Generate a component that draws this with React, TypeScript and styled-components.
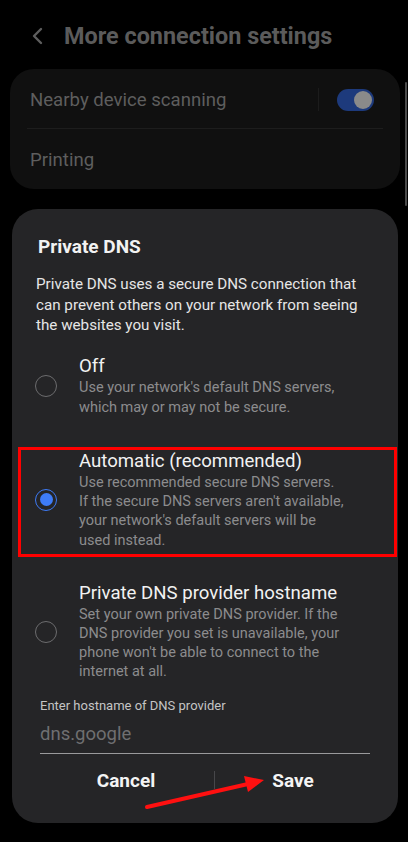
import React from "react";
import styled, { createGlobalStyle } from "styled-components";

const Global = createGlobalStyle`
  html, body { margin: 0; padding: 0; background: #000; }
  body { font-family: Roboto, "Noto Sans", Arial, sans-serif; -webkit-font-smoothing: antialiased; }
  #root { width: 408px; height: 842px; }
`;

const Screen = styled.div`
  position: relative;
  width: 408px;
  height: 842px;
  background: #000;
  overflow: hidden;
  display: flex;
  flex-direction: column;
`;

const Header = styled.div`
  height: 69px;
  display: flex;
  align-items: center;
  padding-left: 31px;
  gap: 19px;
  box-sizing: border-box;
  padding-top: 3px;
`;

const Title = styled.div`
  font-size: 23.4px;
  font-weight: 700;
  color: #5b5b5b;
`;

const Card = styled.div`
  margin: 0 8px 0 10px;
  background: #101010;
  border-radius: 24px;
  display: flex;
  flex-direction: column;
`;

const Row = styled.div<{ $divider?: boolean }>`
  position: relative;
  height: 60px;
  display: flex;
  align-items: center;
  padding: 1px 26px 0 20px;
  box-sizing: border-box;
  font-size: 18.6px;
  color: #5e5e5e;
  ${(p) =>
    p.$divider &&
    `&::after { content: ""; position: absolute; left: 17px; right: 17px; bottom: 0; height: 1px; background: #1d1d1d; }`}
`;

const RowLabel = styled.span`
  flex: 1;
`;

const VDivider = styled.div`
  width: 1px;
  height: 23px;
  background: #1c1c1c;
  margin-right: 18px;
`;

const Toggle = styled.div`
  width: 37px;
  height: 22px;
  border-radius: 11px;
  background: #1d3a7c;
  display: flex;
  align-items: center;
  justify-content: flex-end;
  padding-right: 2px;
  box-sizing: border-box;
`;

const Knob = styled.div`
  width: 18px;
  height: 18px;
  border-radius: 50%;
  background: #8a8a8a;
`;

const ScrollBar = styled.div`
  position: absolute;
  left: 405px;
  top: 82px;
  width: 2px;
  height: 124px;
  background: #4a4a4a;
  border-radius: 1px;
`;

const Dialog = styled.div`
  position: relative;
  margin: 20px 10px 0 12px;
  background: #252527;
  border-radius: 26px;
  padding: 26px 0 21px;
  display: flex;
  flex-direction: column;
`;

const DialogTitle = styled.div`
  margin: 0 24px 0 26px;
  font-size: 19px;
  line-height: 24px;
  font-weight: 700;
  color: #f2f2f2;
`;

const DialogText = styled.div`
  margin: 15px 18px 0 24px;
  font-size: 15.2px;
  line-height: 20.5px;
  color: #e6e6e6;
`;

const Options = styled.div`
  margin: 16px 1px 0 6px;
  display: flex;
  flex-direction: column;
  gap: 22px;
`;

const Option = styled.div<{ $highlight?: boolean }>`
  display: flex;
  align-items: center;
  gap: 22px;
  padding: 0 8px 4px 14px;
  border: 3px solid ${(p) => (p.$highlight ? "#ff0000" : "transparent")};
`;

const Radio = styled.div<{ $checked?: boolean }>`
  flex: none;
  width: 22px;
  height: 22px;
  box-sizing: border-box;
  border-radius: 50%;
  border: 1.5px solid ${(p) => (p.$checked ? "#3d7af5" : "#6c6c6e")};
  display: flex;
  align-items: center;
  justify-content: center;
  &::after {
    content: "";
    width: 13px;
    height: 13px;
    border-radius: 50%;
    background: ${(p) => (p.$checked ? "#3e7cf8" : "transparent")};
  }
`;

const OptionBody = styled.div`
  display: flex;
  flex-direction: column;
`;

const OptionTitle = styled.div`
  font-size: 18.6px;
  line-height: 23px;
  color: #f2f2f2;
`;

const OptionDesc = styled.div<{ $lh?: number }>`
  font-size: 14.5px;
  line-height: ${(p) => p.$lh ?? 19.4}px;
  color: #8c8c8e;
`;

const Field = styled.div`
  margin: 9px 28px 0 28px;
  display: flex;
  flex-direction: column;
`;

const FieldLabel = styled.div`
  font-size: 13px;
  line-height: 18px;
  color: #c4c4c4;
`;

const FieldInput = styled.div`
  margin-top: 6px;
  font-size: 18.5px;
  line-height: 26px;
  color: #6f6f71;
  padding-bottom: 6px;
  border-bottom: 1.5px solid #9a9a9c;
`;

const Buttons = styled.div`
  margin: 4px 27px 0 26px;
  height: 44px;
  display: grid;
  grid-template-columns: 176px 1px 1fr;
  align-items: center;
`;

const ButtonText = styled.div`
  text-align: center;
  font-size: 19px;
  font-weight: 700;
  color: #f4f4f4;
`;

const BtnDivider = styled.div`
  height: 18px;
  background: #47474a;
`;

const Arrow = styled.svg`
  position: absolute;
  left: 0;
  top: 0;
  pointer-events: none;
`;

function Chevron() {
  return (
    <svg width="14" height="18" viewBox="0 0 14 18">
      <path d="M10 2 L3 9 L10 16" fill="none" stroke="#5e5e5e" strokeWidth="2.4" strokeLinecap="round" strokeLinejoin="round" />
    </svg>
  );
}

export default function App() {
  return (
    <Screen>
      <Global />
      <Header>
        <Chevron />
        <Title>More connection settings</Title>
      </Header>
      <Card>
        <Row $divider>
          <RowLabel>Nearby device scanning</RowLabel>
          <VDivider />
          <Toggle>
            <Knob />
          </Toggle>
        </Row>
        <Row>
          <RowLabel>Printing</RowLabel>
        </Row>
      </Card>
      <ScrollBar />
      <Dialog>
        <DialogTitle>Private DNS</DialogTitle>
        <DialogText>
          Private DNS uses a secure DNS connection that can prevent others on your network from seeing the websites you visit.
        </DialogText>
        <Options>
          <Option>
            <Radio />
            <OptionBody>
              <OptionTitle>Off</OptionTitle>
              <OptionDesc $lh={20}>
                Use your network's default DNS servers,
                <br />
                which may or may not be secure.
              </OptionDesc>
            </OptionBody>
          </Option>
          <Option $highlight>
            <Radio $checked />
            <OptionBody>
              <OptionTitle>Automatic (recommended)</OptionTitle>
              <OptionDesc>
                Use recommended secure DNS servers.
                <br />
                If the secure DNS servers aren't available,
                <br />
                your network's default servers will be
                <br />
                used instead.
              </OptionDesc>
            </OptionBody>
          </Option>
          <Option>
            <Radio />
            <OptionBody>
              <OptionTitle>Private DNS provider hostname</OptionTitle>
              <OptionDesc $lh={19}>
                Set your own private DNS provider. If the
                <br />
                DNS provider you set is unavailable, your
                <br />
                phone won't be able to connect to the
                <br />
                internet at all.
              </OptionDesc>
            </OptionBody>
          </Option>
        </Options>
        <Field>
          <FieldLabel>Enter hostname of DNS provider</FieldLabel>
          <FieldInput>dns.google</FieldInput>
        </Field>
        <Buttons>
          <ButtonText>Cancel</ButtonText>
          <BtnDivider />
          <ButtonText>Save</ButtonText>
        </Buttons>
      </Dialog>
      <Arrow width="408" height="842" viewBox="0 0 408 842">
        <line x1="147" y1="807" x2="248" y2="784" stroke="#ff1010" strokeWidth="4" strokeLinecap="round" />
        <polygon points="264,780 244,776 248,792" fill="#ff1010" />
      </Arrow>
    </Screen>
  );
}
